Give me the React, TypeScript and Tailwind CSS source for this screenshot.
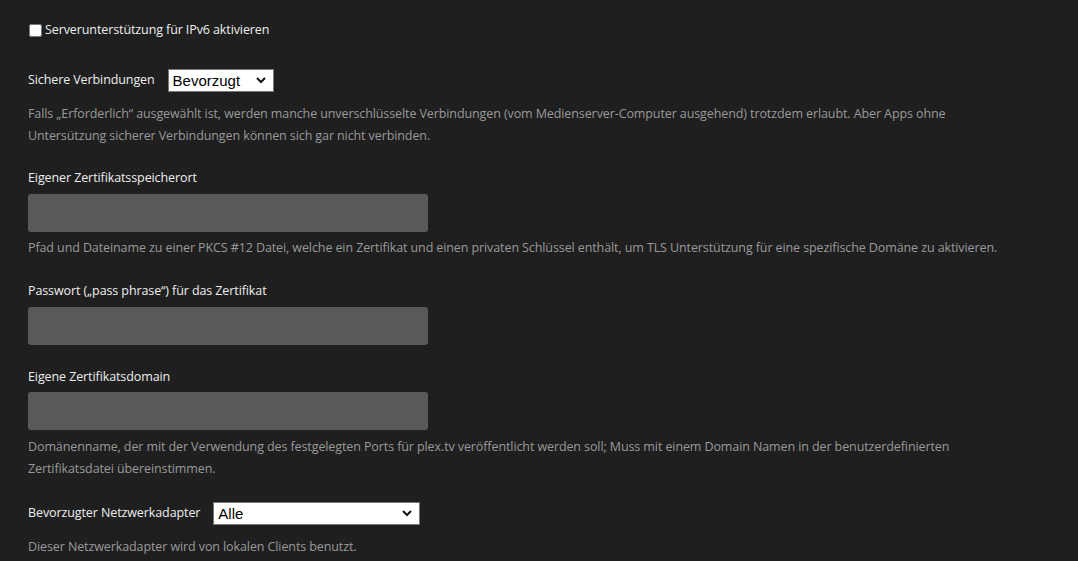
import { useState } from "react";

const FONT = { fontFamily: '"Open Sans", "Noto Sans", sans-serif', letterSpacing: "-0.1px" };

function Chevron() {
  return (
    <svg
      className="pointer-events-none absolute right-[8px] top-1/2 -translate-y-1/2"
      width="10"
      height="7"
      viewBox="0 0 10 7"
      fill="none"
    >
      <path d="M1 1.5 L5 5.5 L9 1.5" stroke="#111" strokeWidth="2" />
    </svg>
  );
}

function Select({ value, options, width }: { value: string; options: string[]; width: string }) {
  const [v, setV] = useState(value);
  return (
    <div className={`relative ${width}`}>
      <select
        value={v}
        onChange={(e) => setV(e.target.value)}
        className="h-[23px] w-full appearance-none rounded-none border border-[#767676] bg-white pl-[4px] pr-6 text-[15px] leading-[21px] text-black outline-none"
        style={{ fontFamily: '"Liberation Sans", Arial, sans-serif', letterSpacing: "0px" }}
      >
        {options.map((o) => (
          <option key={o}>{o}</option>
        ))}
      </select>
      <Chevron />
    </div>
  );
}

function TextField() {
  return <input type="text" className="block h-[38px] w-[400px] rounded-[3px] bg-[#595959] px-3 text-[13px] text-white outline-none" />;
}

function Hint({ children }: { children: React.ReactNode }) {
  return <p className="text-[12.5px] leading-[22px] text-[#9a9a9a]">{children}</p>;
}

function Label({ children }: { children: React.ReactNode }) {
  return <div className="text-[12.5px] leading-[22px] text-[#eeeeee]">{children}</div>;
}

export default function App() {
  return (
    <div className="min-h-[561px] bg-[#1f1f1f] pl-[28px] pt-[20px]" style={FONT}>
      <div className="w-[980px]">
        {/* IPv6 */}
        <label className="flex h-[20px] items-center gap-[3px] text-[12.5px] text-[#eeeeee]">
          <input type="checkbox" className="m-0 ml-[1px] h-[13px] w-[13px]" />
          Serverunterstützung für IPv6 aktivieren
        </label>

        {/* Sichere Verbindungen */}
        <div className="mt-[28px] flex items-center gap-[13px]">
          <Label>Sichere Verbindungen</Label>
          <Select value="Bevorzugt" options={["Deaktiviert", "Bevorzugt", "Erforderlich"]} width="w-[106px]" />
        </div>
        <div className="mt-[11px]">
          <Hint>
            Falls „Erforderlich“ ausgewählt ist, werden manche unverschlüsselte Verbindungen (vom Medienserver-Computer ausgehend) trotzdem erlaubt. Aber Apps ohne Untersützung sicherer Verbindungen können sich gar nicht verbinden.
          </Hint>
        </div>

        {/* Zertifikatsspeicherort */}
        <div className="mt-[20px]">
          <Label>Eigener Zertifikatsspeicherort</Label>
          <div className="mt-[5px]">
            <TextField />
          </div>
          <div className="mt-[5px]">
            <Hint>
              Pfad und Dateiname zu einer PKCS #12 Datei, welche ein Zertifikat und einen privaten Schlüssel enthält, um TLS Unterstützung für eine spezifische Domäne zu aktivieren.
            </Hint>
          </div>
        </div>

        {/* Passwort */}
        <div className="mt-[21px]">
          <Label>Passwort („pass phrase“) für das Zertifikat</Label>
          <div className="mt-[5px]">
            <TextField />
          </div>
        </div>

        {/* Domain */}
        <div className="mt-[21px]">
          <Label>Eigene Zertifikatsdomain</Label>
          <div className="mt-[4px]">
            <TextField />
          </div>
          <div className="mt-[6px]">
            <Hint>
              Domänenname, der mit der Verwendung des festgelegten Ports für plex.tv veröffentlicht werden soll; Muss mit einem Domain Namen in der benutzerdefinierten Zertifikatsdatei übereinstimmen.
            </Hint>
          </div>
        </div>

        {/* Netzwerkadapter */}
        <div className="mt-[21px] flex items-center gap-[13px]">
          <Label>Bevorzugter Netzwerkadapter</Label>
          <Select value="Alle" options={["Alle"]} width="w-[207px]" />
        </div>
        <div className="mt-[11px]">
          <Hint>Dieser Netzwerkadapter wird von lokalen Clients benutzt.</Hint>
        </div>
      </div>
    </div>
  );
}
